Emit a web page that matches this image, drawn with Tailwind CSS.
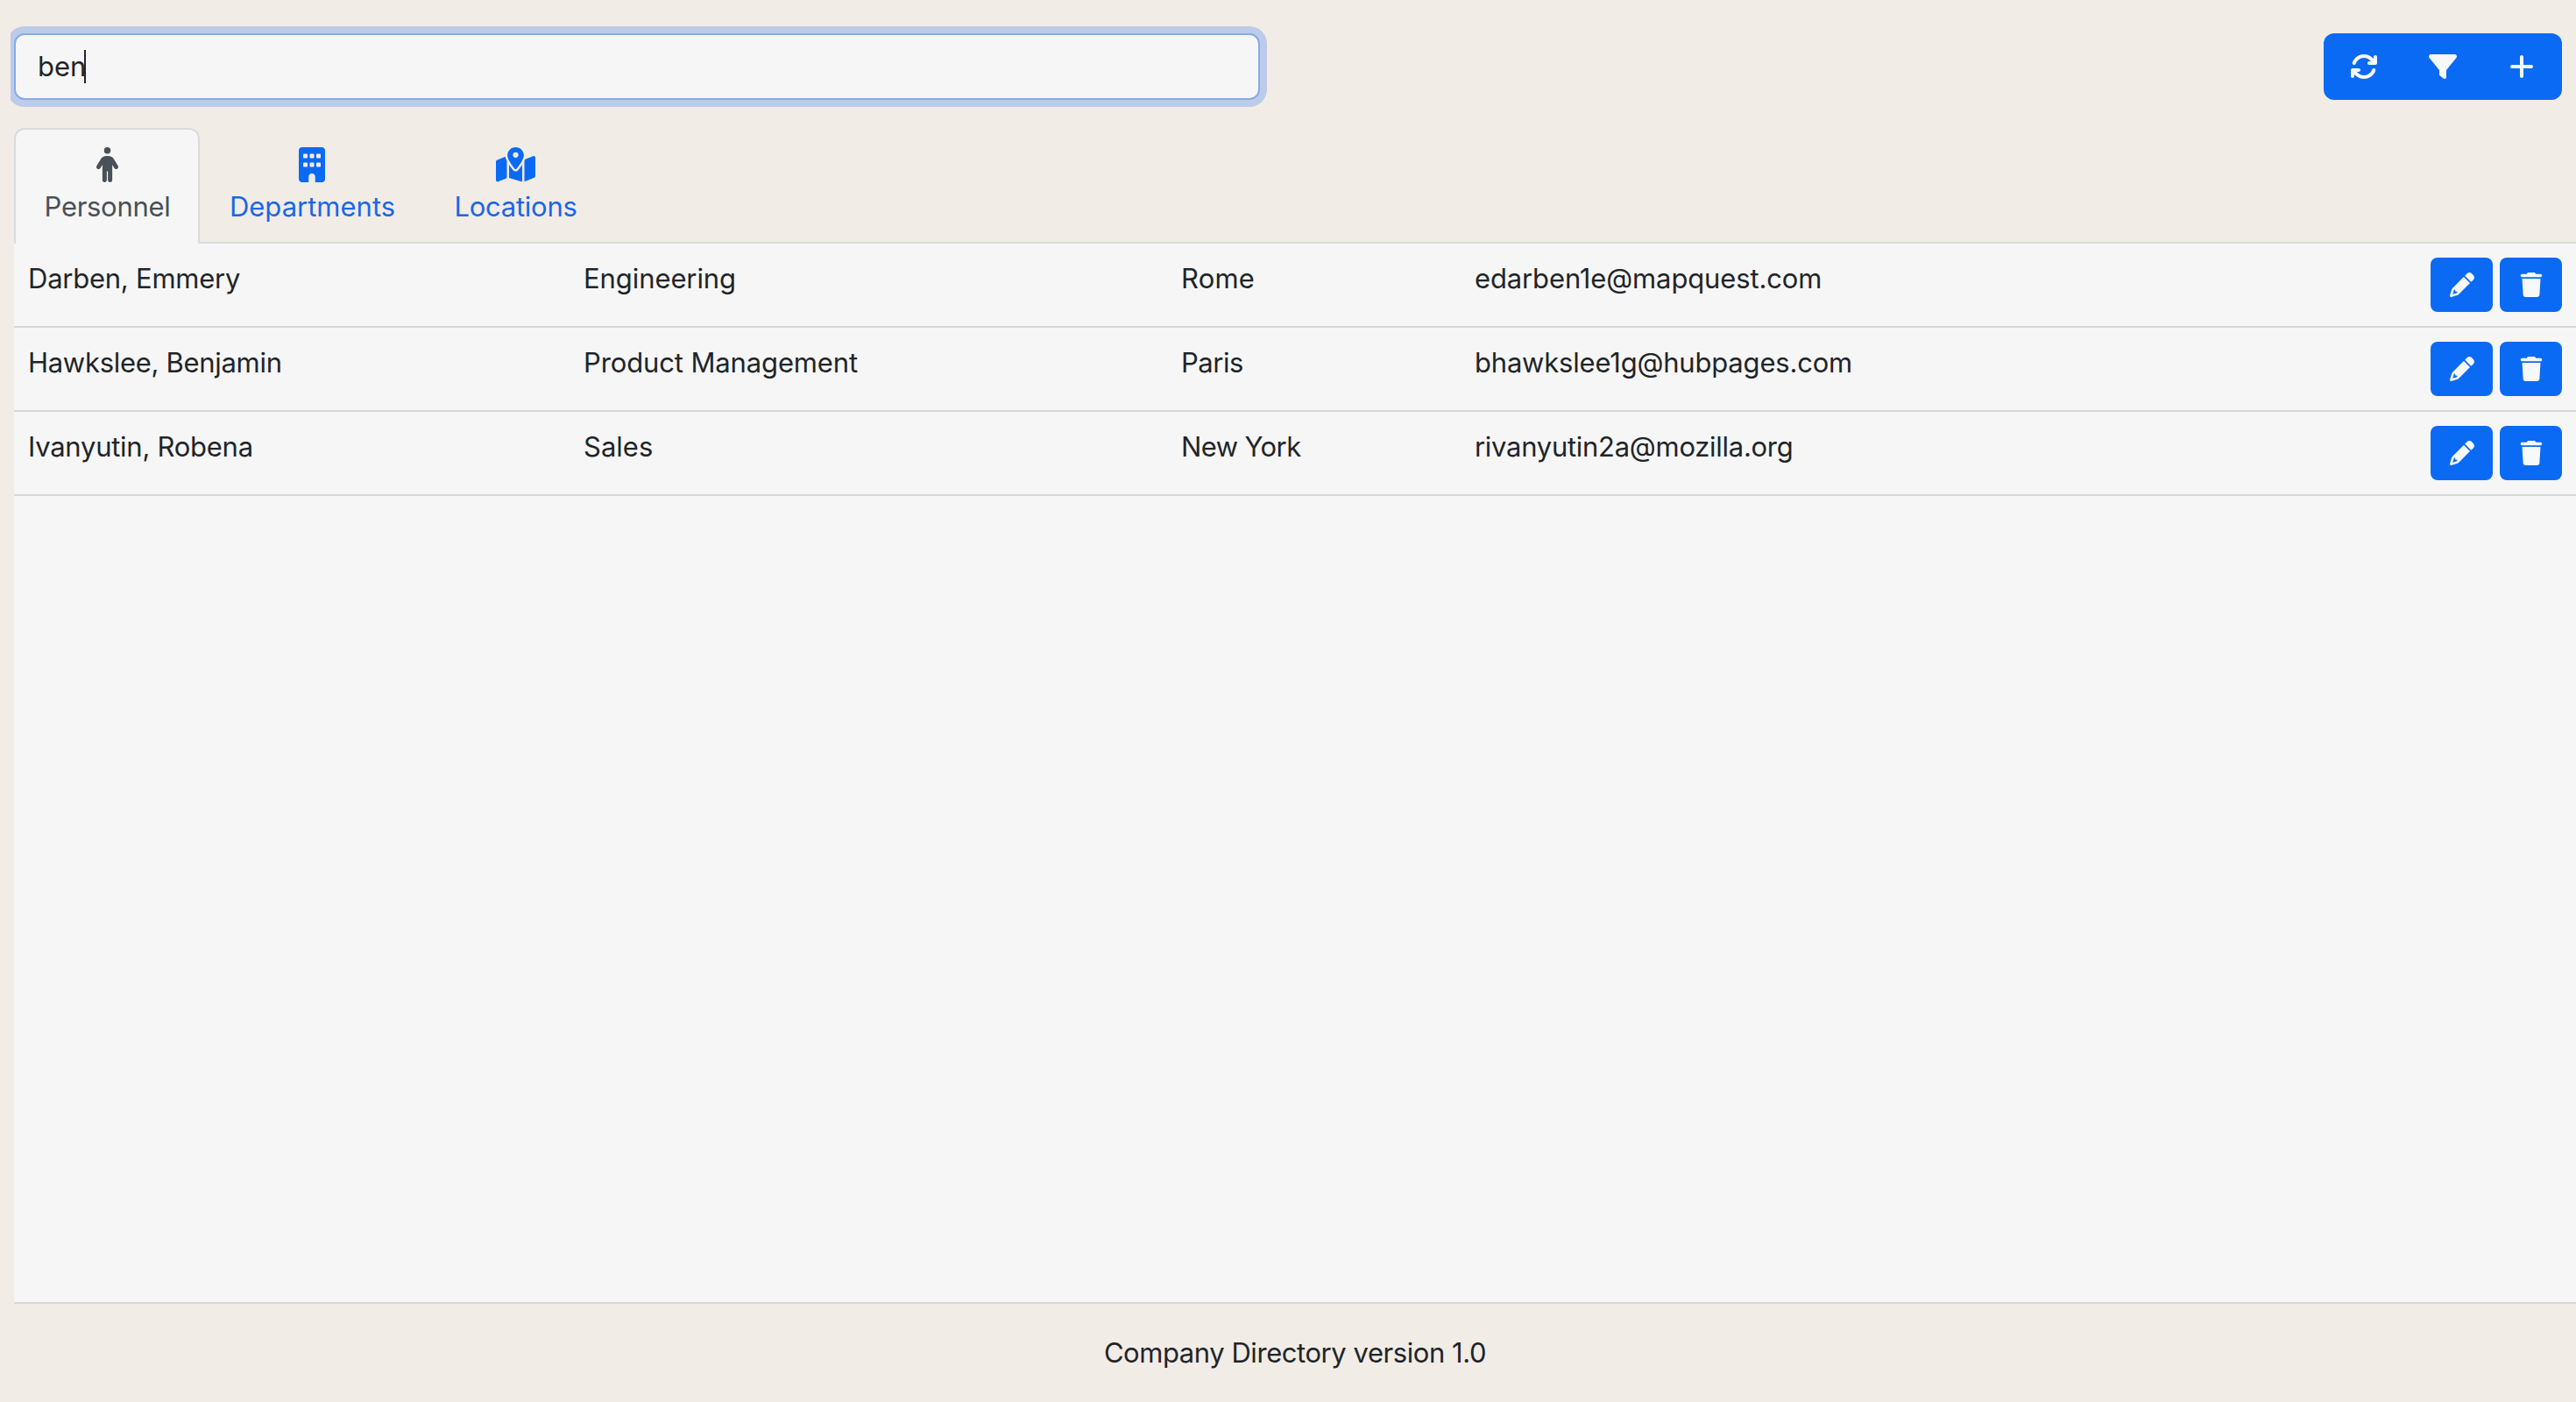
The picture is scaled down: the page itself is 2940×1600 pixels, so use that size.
<!DOCTYPE html>
<html lang="en">
<head>
<meta charset="utf-8">
<title>Company Directory</title>
<script src="https://cdn.jsdelivr.net/npm/@tailwindcss/browser@4"></script>
</head>
<body class="flex h-screen flex-col overflow-hidden bg-[#f1ece6] font-['Inter',sans-serif] text-[31px] leading-[48px] text-[#212529]">
<svg class="hidden" xmlns="http://www.w3.org/2000/svg">
  <symbol id="pencil" viewBox="0 0 512 512"><path d="M410.3 231l11.3-11.3-33.9-33.9-62.1-62.1L291.7 89.8l-11.3 11.3-22.6 22.6L58.6 322.9c-10.4 10.4-18 23.3-22.2 37.4L1 480.7c-2.5 8.4-.2 17.5 6.1 23.7s15.3 8.5 23.7 6.1l120.3-35.4c14.1-4.2 27-11.8 37.4-22.2L387.7 253.7 410.3 231zM160 399.4l-9.1 22.7c-4 3.1-8.5 5.4-13.3 6.9L59.4 452l23-78.1c1.4-4.9 3.8-9.4 6.9-13.3l22.7-9.1v32c0 8.8 7.2 16 16 16h32zM362.7 18.7L348.3 33.2 325.7 55.8 314.3 67.1l33.9 33.9 62.1 62.1 33.9 33.9 11.3-11.3 22.6-22.6 14.5-14.5c25-25 25-65.5 0-90.5L453.3 18.7c-25-25-65.5-25-90.5 0z"/></symbol>
  <symbol id="trash" viewBox="0 0 448 512"><path d="M135.2 17.7L128 32H32C14.3 32 0 46.3 0 64S14.3 96 32 96H416c17.7 0 32-14.3 32-32s-14.3-32-32-32H320l-7.2-14.3C307.4 6.8 296.3 0 284.2 0H163.8c-12.1 0-23.2 6.8-28.6 17.7zM416 128H32L53.2 467c1.6 25.3 22.6 45 47.9 45H346.9c25.3 0 46.3-19.7 47.9-45L416 128z"/></symbol>
</svg>

<header class="ml-3 flex h-[146px] items-start justify-between overflow-hidden pt-[38px] pr-4 pl-1">
  <div class="flex h-[76px] w-[1422px] items-center rounded-xl border-2 border-[#86abe6] bg-[#f6f6f6] px-[25px] shadow-[0_0_0_8px_#bccbea]">
    <span class="tracking-[-0.03px]">ben</span><span class="-ml-[2px] h-[38px] w-[2px] bg-[#212529]"></span>
  </div>
  <div class="flex h-[76px] overflow-hidden rounded-xl bg-[#0b6af4] text-[#f6f8fa]">
    <button class="flex w-[92px] items-center justify-center"><svg class="size-8" fill="currentColor" viewBox="0 0 512 512"><path d="M105.1 202.6c7.7-21.8 20.2-42.3 37.8-59.8c62.5-62.5 163.8-62.5 226.3 0L386.3 160H352c-17.7 0-32 14.3-32 32s14.3 32 32 32H463.5h.4c17.7 0 32-14.3 32-32V80c0-17.7-14.3-32-32-32s-32 14.3-32 32v35.2L414.4 97.6c-87.5-87.5-229.3-87.5-316.8 0C73.2 122 55.6 150.7 44.8 181.4c-5.9 16.7 2.9 34.9 19.5 40.8s34.9-2.9 40.8-19.5zM39 289.3c-5 1.5-9.8 4.2-13.7 8.2c-4 4-6.7 8.8-8.1 14c-.3 1.2-.6 2.5-.8 3.8c-.3 1.7-.4 3.4-.4 5.1V432c0 17.7 14.3 32 32 32s32-14.3 32-32V396.9l17.6 17.5c87.5 87.4 229.3 87.4 316.7 0c24.4-24.4 42.1-53.1 52.9-83.7c5.9-16.7-2.9-34.9-19.5-40.8s-34.9 2.9-40.8 19.5c-7.7 21.8-20.2 42.3-37.8 59.8c-62.5 62.5-163.8 62.5-226.3 0l-.1-.1L125.6 352H160c17.7 0 32-14.3 32-32s-14.3-32-32-32H48.4c-1.6 0-3.2 .1-4.8 .3s-3.1 .5-4.6 1z"/></svg></button>
    <button class="flex w-[88px] items-center justify-center"><svg class="size-8" fill="currentColor" viewBox="0 0 512 512"><path d="M3.9 54.9C10.5 40.9 24.5 32 40 32H472c15.5 0 29.5 8.9 36.1 22.9s4.6 30.5-5.2 42.5L320 320.9V448c0 12.1-6.8 23.2-17.7 28.6s-23.8 4.3-33.5-3l-64-48c-8.1-6-12.8-15.5-12.8-25.6V320.9L9 97.3C-.7 85.4-2.8 68.8 3.9 54.9z"/></svg></button>
    <button class="flex w-[92px] items-center justify-center"><svg class="h-8 w-7" fill="currentColor" viewBox="0 0 448 512"><path d="M256 80c0-17.7-14.3-32-32-32s-32 14.3-32 32V224H48c-17.7 0-32 14.3-32 32s14.3 32 32 32H192V432c0 17.7 14.3 32 32 32s32-14.3 32-32V288H400c17.7 0 32-14.3 32-32s-14.3-32-32-32H256V80z"/></svg></button>
  </div>
</header>

<nav class="ml-4 flex h-[132px] shrink-0 text-[#1a67e4]">
  <div class="flex w-[212px] flex-col items-center rounded-t-xl border-2 border-b-0 border-[#d9dbdd] bg-[#f6f6f6] pt-4 text-[#495057]">
    <span class="flex h-12 items-center"><svg class="h-10 w-[25px]" fill="#495057" viewBox="0 0 320 512"><path d="M112 48a48 48 0 1 1 96 0 48 48 0 1 1 -96 0zm40 304V480c0 17.7-14.3 32-32 32s-32-14.3-32-32V256.9L59.4 304.5c-9.1 15.1-28.8 20-43.9 10.9s-20-28.8-10.9-43.9l58.3-97c17.4-28.9 48.6-46.6 82.3-46.6h29.7c33.7 0 64.9 17.7 82.3 46.6l58.3 97c9.1 15.1 4.2 34.8-10.9 43.9s-34.8 4.2-43.9-10.9L232 256.9V480c0 17.7-14.3 32-32 32s-32-14.3-32-32V352H152z"/></svg></span>
    <span class="pl-px tracking-[-0.3px]">Personnel</span>
  </div>
  <div class="flex w-[256px] flex-col items-center border-b-2 border-[#d9dbdd] pt-[18px]">
    <span class="flex h-12 items-center"><svg class="h-10 w-[30px]" fill="#0b6af4" viewBox="0 0 384 512"><path d="M48 0C21.5 0 0 21.5 0 48V464c0 26.5 21.5 48 48 48h96V432c0-26.5 21.5-48 48-48s48 21.5 48 48v80h96c26.5 0 48-21.5 48-48V48c0-26.5-21.5-48-48-48H48zM64 240c0-8.8 7.2-16 16-16h32c8.8 0 16 7.2 16 16v32c0 8.8-7.2 16-16 16H80c-8.8 0-16-7.2-16-16V240zm112-16h32c8.8 0 16 7.2 16 16v32c0 8.8-7.2 16-16 16H176c-8.8 0-16-7.2-16-16V240c0-8.8 7.2-16 16-16zm80 16c0-8.8 7.2-16 16-16h32c8.8 0 16 7.2 16 16v32c0 8.8-7.2 16-16 16H272c-8.8 0-16-7.2-16-16V240zM80 96h32c8.8 0 16 7.2 16 16v32c0 8.8-7.2 16-16 16H80c-8.8 0-16-7.2-16-16V112c0-8.8 7.2-16 16-16zm80 16c0-8.8 7.2-16 16-16h32c8.8 0 16 7.2 16 16v32c0 8.8-7.2 16-16 16H176c-8.8 0-16-7.2-16-16V112zM272 96h32c8.8 0 16 7.2 16 16v32c0 8.8-7.2 16-16 16H272c-8.8 0-16-7.2-16-16V112c0-8.8 7.2-16 16-16z"/></svg></span>
    <span class="pl-px">Departments</span>
  </div>
  <div class="flex w-[208px] flex-col items-center border-b-2 border-[#d9dbdd] pt-[18px]">
    <span class="flex h-12 items-center"><svg class="h-10 w-[45px]" fill="#0b6af4" viewBox="0 0 576 512"><path d="M408 120c0 54.6-73.1 151.9-105.2 192c-7.7 9.6-22 9.6-29.6 0C241.1 271.9 168 174.6 168 120C168 53.7 221.7 0 288 0s120 53.7 120 120zm8 80.4c3.5-6.9 6.7-13.8 9.6-20.6c.5-1.2 1-2.5 1.5-3.7l116-46.4C558.9 123.4 576 135 576 152V422.8c0 9.8-6 18.6-15.1 22.3L416 503V200.4zM137.6 138.3c2.4 14.1 7.2 28.3 12.8 41.5c2.9 6.8 6.1 13.7 9.6 20.6V451.8L32.9 502.7C17.1 509 0 497.4 0 480.4V209.6c0-9.8 6-18.6 15.1-22.3l122.6-49zM327.8 332c13.9-17.4 35.7-45.7 56.2-77V504.3L192 449.4V255c20.5 31.3 42.3 59.6 56.2 77c20.5 25.6 59.1 25.6 79.6 0zM288 152a40 40 0 1 0 0-80 40 40 0 1 0 0 80z"/></svg></span>
    <span class="pl-px tracking-[-0.26px]">Locations</span>
  </div>
  <div class="grow border-b-2 border-[#d9dbdd]"></div>
</nav>

<main class="ml-4 grow bg-[#f6f6f6]">
  <div class="grid h-24 grid-cols-[634px_682px_335px_1fr_auto] border-b-2 border-[#d6d8da] pt-4 pr-4 pl-4">
    <span class="tracking-[-0.24px]">Darben, Emmery</span>
    <span class="tracking-[-0.08px]">Engineering</span>
    <span class="tracking-[0.2px]">Rome</span>
    <span class="tracking-[-0.13px]">edarben1e@mapquest.com</span>
    <span class="flex gap-2 text-[#f6f8fa]">
      <button class="flex h-[62px] w-[71px] items-center justify-center rounded-lg bg-[#0b6af4]"><svg class="size-7" fill="currentColor"><use href="#pencil"/></svg></button>
      <button class="flex h-[62px] w-[71px] items-center justify-center rounded-lg bg-[#0b6af4]"><svg class="size-7" fill="currentColor"><use href="#trash"/></svg></button>
    </span>
  </div>
  <div class="grid h-24 grid-cols-[634px_682px_335px_1fr_auto] border-b-2 border-[#d6d8da] pt-4 pr-4 pl-4">
    <span class="tracking-[-0.3px]">Hawkslee, Benjamin</span>
    <span class="tracking-[-0.13px]">Product Management</span>
    <span class="tracking-[-0.47px]">Paris</span>
    <span class="tracking-[-0.2px]">bhawkslee1g@hubpages.com</span>
    <span class="flex gap-2 text-[#f6f8fa]">
      <button class="flex h-[62px] w-[71px] items-center justify-center rounded-lg bg-[#0b6af4]"><svg class="size-7" fill="currentColor"><use href="#pencil"/></svg></button>
      <button class="flex h-[62px] w-[71px] items-center justify-center rounded-lg bg-[#0b6af4]"><svg class="size-7" fill="currentColor"><use href="#trash"/></svg></button>
    </span>
  </div>
  <div class="grid h-24 grid-cols-[634px_682px_335px_1fr_auto] border-b-2 border-[#d6d8da] pt-4 pr-4 pl-4">
    <span class="tracking-[-0.26px]">Ivanyutin, Robena</span>
    <span>Sales</span>
    <span class="tracking-[-0.6px]">New York</span>
    <span class="tracking-[-0.28px]">rivanyutin2a@mozilla.org</span>
    <span class="flex gap-2 text-[#f6f8fa]">
      <button class="flex h-[62px] w-[71px] items-center justify-center rounded-lg bg-[#0b6af4]"><svg class="size-7" fill="currentColor"><use href="#pencil"/></svg></button>
      <button class="flex h-[62px] w-[71px] items-center justify-center rounded-lg bg-[#0b6af4]"><svg class="size-7" fill="currentColor"><use href="#trash"/></svg></button>
    </span>
  </div>
</main>

<footer class="ml-4 h-[114px] shrink-0 border-t-2 border-[#d9d8d5] pt-8 text-center tracking-[-0.44px]">Company Directory version 1.0</footer>
</body>
</html>
